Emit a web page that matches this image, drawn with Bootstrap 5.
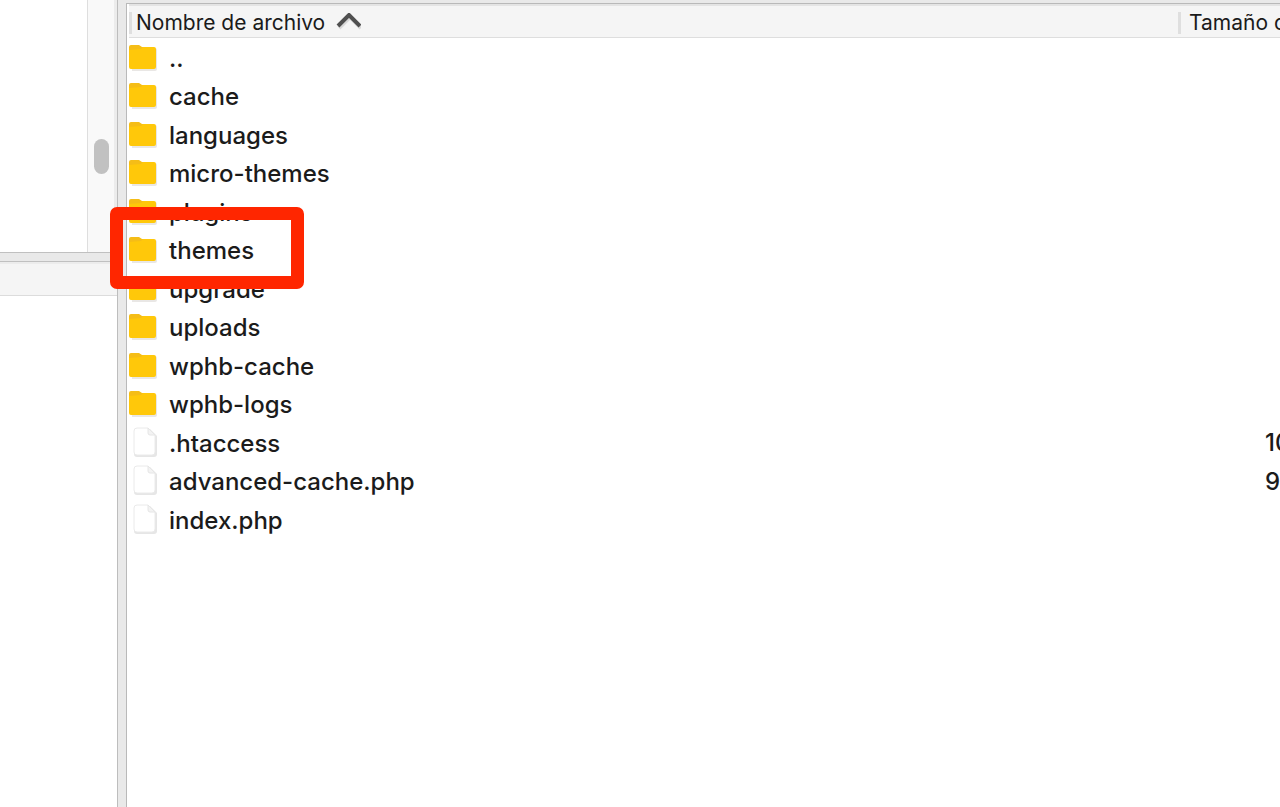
<!DOCTYPE html>
<html lang="es">
<head>
<meta charset="utf-8">
<meta name="viewport" content="width=device-width, initial-scale=1">
<title>Archivos remotos</title>
<link href="https://cdn.jsdelivr.net/npm/bootstrap@5.3.0/dist/css/bootstrap.min.css" rel="stylesheet">
<style>
  body { font-family: Inter, "Liberation Sans", sans-serif; color: #1b1b1b; background: #e9e9e9; }
  .side { width: 117px; }
  .tree { height: 252px; }
  .track { width: 27px; background: #f9f9f9; border-left: 1px solid #dedede; padding: 139px 5px 0 6px; }
  .thumb { height: 35px; width: 15px; background: #c1c1c1; }
  .edge { width: 3px; background: #ececec; }
  .hsplit { height: 10px; background: #e9e9e9; border: solid #c0c0c0; border-width: 1px 0; }
  .side-head { height: 34px; background: #f5f5f5; border-top: 2px solid #ececec; border-bottom: 1px solid #dcdcdc; }
  .vsplit { width: 9px; background: #e9e9e9; border-left: 1px solid #bdbdbd; }
  .files-pane { margin-top: 3px; border: solid #b9b9b9; border-width: 1px 0 0 1px; min-width: 0; }
  .files { width: calc(100% + 60px); table-layout: fixed; border-top: 2px solid #e4e4e4; margin-left: 2px; }
  .files th { height: 32px; background: #f5f5f5; border-bottom: 1px solid #dedede; padding: 3px 0 0; font-size: 21px; line-height: 28px; }
  .files td { padding: 0; font-size: 24px; font-weight: 500; line-height: 30px; white-space: nowrap; }
  .files tbody tr { height: 38px; }
  .files tbody tr:nth-child(odd) { height: 39px; }
  .size-col { width: 164px; }
  .colbar { width: 3px; height: 22px; background: #dfdfdf; }
  .files td.bytes { padding: 2px 0 0 87px; }
  .sort { border: 0; background: none; padding: 0; color: inherit; }
  .icon { width: 28px; height: 32px; flex: none; }
  .name { margin-left: 12px; padding-top: 3px; }
  .marked { position: relative; }
  .marker { position: absolute; left: -19px; top: -26px; width: 194px; height: 82px; border: 13px solid #ff2600; border-radius: 7px; pointer-events: none; }
</style>
</head>
<body>
<svg class="d-none" aria-hidden="true">
  <symbol id="folder" viewBox="0 0 28 32">
    <path d="M2 7h24a2 2 0 0 1 2 2v19a2 2 0 0 1-2 2H3z" fill="#e9e7e5"/>
    <path d="M0 6a2 2 0 0 1 2-2h8l3 2h12v4H0z" fill="#f5bd17"/>
    <path d="M0 9l12-1 2-2h11a2 2 0 0 1 2 2v18a2 2 0 0 1-2 2H2a2 2 0 0 1-2-2z" fill="#ffc80a"/>
  </symbol>
  <symbol id="file" viewBox="0 0 28 32">
    <path d="M8 3h13l7 7v18a3 3 0 0 1-3 3H8a3 3 0 0 1-3-3V6a3 3 0 0 1 3-3z" fill="#e6e6e6"/>
    <path d="M8 2h11l7 7v17a3 3 0 0 1-3 3H8a3 3 0 0 1-3-3V5a3 3 0 0 1 3-3z" fill="#fff" stroke="#eaeaea"/>
    <path d="M19 2v5a2 2 0 0 0 2 2h5z" fill="#f3f3f3" stroke="#e6e6e6"/>
  </symbol>
</svg>
<div class="d-flex min-vh-100 overflow-hidden">
  <aside class="side d-flex flex-column flex-shrink-0">
    <div class="tree d-flex">
      <div class="flex-grow-1 bg-white"></div>
      <div class="track"><div class="thumb rounded-pill"></div></div>
      <div class="edge"></div>
    </div>
    <div class="hsplit"></div>
    <div class="side-head"></div>
    <div class="flex-grow-1 bg-white"></div>
  </aside>
  <div class="vsplit flex-shrink-0"></div>
  <main class="files-pane flex-grow-1 bg-white">
    <table class="files">
      <thead>
        <tr>
          <th scope="col" class="fw-normal" aria-sort="ascending">
            <div class="d-flex align-items-center">
              <span class="colbar me-1"></span>
              <button type="button" class="sort d-flex align-items-center gap-2">Nombre de archivo
                <svg width="28" height="20" viewBox="0 0 28 20" aria-hidden="true"><path d="M6 15 17 4 28 15" fill="none" stroke="#d8d8d8" stroke-width="4"/><path d="M5 13 16 2 27 13" fill="none" stroke="#505050" stroke-width="4"/></svg>
              </button>
            </div>
          </th>
          <th scope="col" class="size-col fw-normal">
            <div class="d-flex align-items-center">
              <span class="colbar me-1"></span>
              <button type="button" class="sort ps-1 text-nowrap">Tamaño de</button>
            </div>
          </th>
        </tr>
      </thead>
      <tbody>
        <tr><td><div class="d-flex align-items-start"><svg class="icon"><use href="#folder"/></svg><span class="name">..</span></div></td><td></td></tr>
        <tr><td><div class="d-flex align-items-start"><svg class="icon"><use href="#folder"/></svg><span class="name">cache</span></div></td><td></td></tr>
        <tr><td><div class="d-flex align-items-start"><svg class="icon"><use href="#folder"/></svg><span class="name">languages</span></div></td><td></td></tr>
        <tr><td><div class="d-flex align-items-start"><svg class="icon"><use href="#folder"/></svg><span class="name">micro-themes</span></div></td><td></td></tr>
        <tr><td><div class="d-flex align-items-start"><svg class="icon"><use href="#folder"/></svg><span class="name">plugins</span></div></td><td></td></tr>
        <tr><td><div class="marked d-flex align-items-start"><svg class="icon"><use href="#folder"/></svg><span class="name">themes</span><span class="marker"></span></div></td><td></td></tr>
        <tr><td><div class="d-flex align-items-start"><svg class="icon"><use href="#folder"/></svg><span class="name">upgrade</span></div></td><td></td></tr>
        <tr><td><div class="d-flex align-items-start"><svg class="icon"><use href="#folder"/></svg><span class="name">uploads</span></div></td><td></td></tr>
        <tr><td><div class="d-flex align-items-start"><svg class="icon"><use href="#folder"/></svg><span class="name">wphb-cache</span></div></td><td></td></tr>
        <tr><td><div class="d-flex align-items-start"><svg class="icon"><use href="#folder"/></svg><span class="name">wphb-logs</span></div></td><td></td></tr>
        <tr><td><div class="d-flex align-items-start"><svg class="icon"><use href="#file"/></svg><span class="name">.htaccess</span></div></td><td class="bytes">10</td></tr>
        <tr><td><div class="d-flex align-items-start"><svg class="icon"><use href="#file"/></svg><span class="name">advanced-cache.php</span></div></td><td class="bytes">9</td></tr>
        <tr><td><div class="d-flex align-items-start"><svg class="icon"><use href="#file"/></svg><span class="name">index.php</span></div></td><td></td></tr>
      </tbody>
    </table>
  </main>
</div>
<script src="https://cdn.jsdelivr.net/npm/bootstrap@5.3.0/dist/js/bootstrap.bundle.min.js"></script>
</body>
</html>
